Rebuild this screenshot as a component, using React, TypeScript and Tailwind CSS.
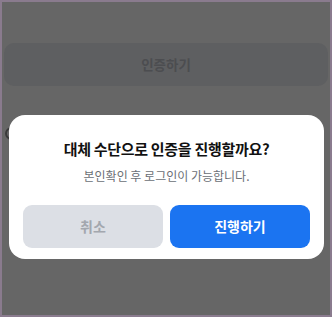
export default function App() {
  return (
    <div className="relative w-[332px] h-[317px] overflow-hidden border-2 border-[#8a7b8e] bg-[#666666] font-['Noto_Sans_CJK_KR',sans-serif]">
      {/* background page (dimmed) */}
      <div className="px-[2px] pt-[41px]">
        <div className="flex h-[43px] items-center justify-center rounded-[10px] bg-[#5e5f61] text-[13.5px] font-bold text-[#4c4d50]">
          인증하기
        </div>
        <div className="mt-[41px] ml-[1px] h-[13px] w-[13px] rounded-full border-2 border-[#3a3a3a]" />
      </div>

      {/* modal */}
      <div className="absolute left-[7px] right-[6px] top-[113px] rounded-[16px] bg-white px-[14px] pt-[22px] pb-[11px]">
        <h2 className="text-center text-[15px] font-bold leading-[24px] tracking-[-0.3px] text-[#111111]">
          대체 수단으로 인증을 진행할까요?
        </h2>
        <p className="mt-[5px] text-center text-[12px] leading-[20px] text-[#6b6f76]">
          본인확인 후 로그인이 가능합니다.
        </p>
        <div className="mt-[19px] flex gap-[7px]">
          <button className="flex h-[43px] flex-1 items-center justify-center rounded-[9px] bg-[#dcdfe5] text-[14px] font-bold text-[#a3a7ae]">
            취소
          </button>
          <button className="flex h-[43px] flex-1 items-center justify-center rounded-[9px] bg-[#1b74f1] text-[14px] font-bold text-white">
            진행하기
          </button>
        </div>
      </div>
    </div>
  );
}
